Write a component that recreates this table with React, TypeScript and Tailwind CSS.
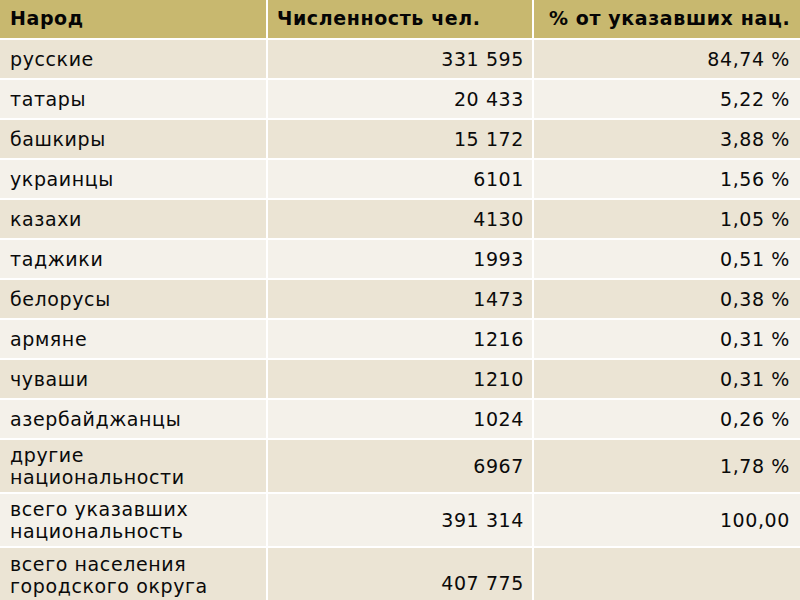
import React from "react";

const rows: [string, string, string][] = [
  ["русские", "331 595", "84,74 %"],
  ["татары", "20 433", "5,22 %"],
  ["башкиры", "15 172", "3,88 %"],
  ["украинцы", "6101", "1,56 %"],
  ["казахи", "4130", "1,05 %"],
  ["таджики", "1993", "0,51 %"],
  ["белорусы", "1473", "0,38 %"],
  ["армяне", "1216", "0,31 %"],
  ["чуваши", "1210", "0,31 %"],
  ["азербайджанцы", "1024", "0,26 %"],
];

export default function App() {
  return (
    <div
      className="w-[800px] h-[600px] overflow-hidden bg-white text-[#0a0a0a] text-[19px] tracking-[0.6px]"
      style={{ fontFamily: '"DejaVu Sans", sans-serif' }}
    >
      <div className="grid grid-cols-[266px_264px_266px] gap-[2px] bg-white">
        <div className="h-[38px] bg-[#c8b86f] pl-[10px] pb-[2px] flex items-center font-bold text-[#050505]">Народ</div>
        <div className="h-[38px] bg-[#c8b86f] pl-[9px] pb-[2px] flex items-center font-bold text-[#050505]">Численность чел.</div>
        <div className="h-[38px] bg-[#c8b86f] pl-[15px] pb-[2px] flex items-center font-bold text-[#050505]">% от указавших нац.</div>
        {rows.map((r, i) => {
          const bg = i % 2 === 0 ? "bg-[#ebe4d4]" : "bg-[#f4f1ea]";
          return (
            <React.Fragment key={r[0]}>
              <div className={`h-[38px] ${bg} pl-[10px] flex items-center`}>{r[0]}</div>
              <div className={`h-[38px] ${bg} pr-[8px] flex items-center justify-end`}>{r[1]}</div>
              <div className={`h-[38px] ${bg} pr-[10px] flex items-center justify-end`}>{r[2]}</div>
            </React.Fragment>
          );
        })}
        <div className="h-[52px] bg-[#ebe4d4] pl-[10px] flex items-center leading-[22px]">
          другие<br />национальности
        </div>
        <div className="h-[52px] bg-[#ebe4d4] pr-[8px] flex items-center justify-end">6967</div>
        <div className="h-[52px] bg-[#ebe4d4] pr-[10px] flex items-center justify-end">1,78 %</div>
        <div className="h-[52px] bg-[#f4f1ea] pl-[10px] flex items-center leading-[22px]">
          всего указавших<br />национальность
        </div>
        <div className="h-[52px] bg-[#f4f1ea] pr-[8px] flex items-center justify-end">391 314</div>
        <div className="h-[52px] bg-[#f4f1ea] pr-[10px] flex items-center justify-end">100,00</div>
        <div className="h-[52px] bg-[#ebe4d4] pl-[10px] pt-[5px] leading-[22px]">
          всего населения<br />городского округа
        </div>
        <div className="h-[52px] bg-[#ebe4d4] pr-[8px] pb-[3px] flex items-end justify-end">407 775</div>
        <div className="h-[52px] bg-[#ebe4d4]"></div>
      </div>
    </div>
  );
}
